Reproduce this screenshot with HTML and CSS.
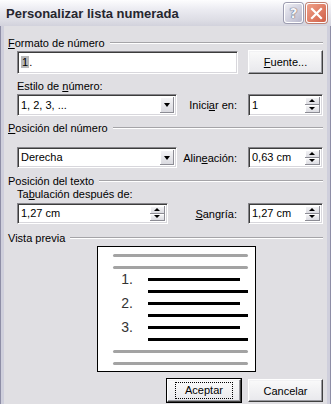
FILE: index.html
```html
<!DOCTYPE html>
<html lang="es">
<head>
  <meta charset="UTF-8" />
  <title>Personalizar lista numerada</title>
  <link rel="stylesheet" href="styles.css">
</head>
<body>
  <div class="window">
    <div class="titlebar">
      <span class="title">Personalizar lista numerada</span>
      <span class="tb-btn tb-help">?</span>
      <span class="tb-btn tb-close">
        <svg width="13" height="13" viewBox="0 0 13 13">
          <path d="M2 2 L11 11 M11 2 L2 11" stroke="#fff" stroke-width="2.2" stroke-linecap="square" />
        </svg>
      </span>
    </div>

    <div class="frame">
      <div class="client">
        <div class="group g-formato"><span><u>F</u>ormato de número</span></div>
        <div class="row row-formato">
          <div class="field text-format"><span class="shade">1</span>.</div>
          <div class="btn btn-fuente"><u>F</u>uente...</div>
        </div>

        <div class="label l-estilo">Estilo de <u>n</u>úmero:</div>
        <div class="row row-estilo">
          <div class="field select">1, 2, 3, ...<span class="drop"></span></div>
          <span class="side-label">Inici<u>a</u>r en:</span>
          <div class="field spin">1<span class="spin-btns"><span class="up"></span><span class="down"></span></span></div>
        </div>

        <div class="group g-numero"><span><u>P</u>osición del número</span></div>
        <div class="row row-numero">
          <div class="field select">Derecha<span class="drop"></span></div>
          <span class="side-label">Alin<u>e</u>ación:</span>
          <div class="field spin">0,63 cm<span class="spin-btns"><span class="up"></span><span class="down"></span></span></div>
        </div>

        <div class="group g-texto"><span>Posición del texto</span></div>
        <div class="label l-tab">Ta<u>b</u>ulación después de:</div>
        <div class="row row-texto">
          <div class="field spin">1,27 cm<span class="spin-btns"><span class="up"></span><span class="down"></span></span></div>
          <span class="side-label"><u>S</u>angría:</span>
          <div class="field spin">1,27 cm<span class="spin-btns"><span class="up"></span><span class="down"></span></span></div>
        </div>

        <div class="group g-vista"><span>Vista previa</span></div>
        <div class="preview">
          <div class="pv-row"><span></span><span class="line gray"></span></div>
          <div class="pv-row"><span></span><span class="line gray"></span></div>
          <div class="pv-row item"><span class="num">1.</span><span class="line black short"></span></div>
          <div class="pv-row item"><span></span><span class="line black"></span></div>
          <div class="pv-row item"><span class="num">2.</span><span class="line black short"></span></div>
          <div class="pv-row item"><span></span><span class="line black"></span></div>
          <div class="pv-row item"><span class="num">3.</span><span class="line black short"></span></div>
          <div class="pv-row item"><span></span><span class="line black"></span></div>
          <div class="pv-row"><span></span><span class="line gray"></span></div>
          <div class="pv-row"><span></span><span class="line gray"></span></div>
        </div>

        <div class="buttons">
          <div class="btn btn-default"><span class="focus">Aceptar</span></div>
          <div class="btn">Cancelar</div>
        </div>
      </div>
    </div>
  </div>
</body>
</html>
```

FILE: styles.css
```css
body {
  margin: 0;
  width: 331px;
  height: 404px;
  overflow: hidden;
  font-family: 'Liberation Sans', Tahoma, sans-serif;
  font-size: 11px;
  color: #000;
  background: #e0dfe3;
}

.window {
  height: 404px;
  display: flex;
  flex-direction: column;
}

/* title bar (XP silver, inactive) */
.titlebar {
  height: 26px;
  flex: none;
  display: flex;
  align-items: center;
  padding: 0 4px 0 6px;
  background: linear-gradient(#fdfdfe, #ececf2 35%, #dcdce4 80%, #d2d2dc);
  box-sizing: border-box;
}

.title {
  flex: 1;
  font-family: 'Liberation Sans', sans-serif;
  font-weight: bold;
  font-size: 13px;
  color: #26262e;
}

.tb-btn {
  width: 19px;
  height: 20px;
  box-sizing: border-box;
  border: 1px solid #fff;
  border-radius: 3px;
  display: flex;
  align-items: center;
  justify-content: center;
}

.tb-help {
  margin-right: 3px;
  background: linear-gradient(135deg, #eeeef4, #b8b8cc);
  box-shadow: 0 0 0 1px #9c9cb0;
  color: #f4f4f8;
  font-family: 'DejaVu Sans', sans-serif;
  font-weight: bold;
  font-size: 14px;
  text-shadow: 0 0 1px #505064, 0 0 1px #505064;
}

.tb-close {
  width: 21px;
  background: linear-gradient(135deg, #f0a088, #d06048);
  box-shadow: 0 0 0 1px #c08070;
}

/* window frame */
.frame {
  flex: 1;
  display: flex;
  border-left: 1px solid #8e8ea6;
  border-right: 1px solid #8e8ea6;
}

.client {
  flex: 1;
  border-left: 3px solid #cfcfdc;
  border-right: 3px solid #cfcfdc;
  padding: 0 4px;
  background: #e0dfe3;
}

u {
  text-decoration: underline;
  text-underline-offset: 1px;
}

/* group titles with an etched rule */
.group {
  height: 14px;
  display: flex;
  align-items: center;
  gap: 5px;
}

.group::after {
  content: "";
  flex: 1;
  border-top: 1px solid #a5a4a8;
  border-bottom: 1px solid #fff;
}

.g-formato { margin-top: 10px; }
.g-numero { margin-top: 5px; }
.g-texto { margin-top: 6px; }
.g-vista { margin-top: 7px; }

.label {
  height: 13px;
  line-height: 13px;
  margin-left: 9px;
}

.l-estilo { margin-top: 6px; }

.row {
  margin-left: 9px;
  display: grid;
  grid-template-columns: 1fr auto 75px;
  align-items: center;
}

.row-formato {
  grid-template-columns: 221px 1fr 75px;
  height: 24px;
}

.row-formato .btn { grid-column: 3; }
.row-estilo { margin-top: 1px; grid-template-columns: 160px 1fr 75px; }
.row-numero { margin-top: 12px; grid-template-columns: 160px 1fr 75px; }
.row-texto { margin-top: 2px; grid-template-columns: 151px 1fr 75px; }

.side-label {
  justify-self: end;
  margin-right: 11px;
}

/* sunken edit fields */
.field {
  position: relative;
  height: 22px;
  box-sizing: border-box;
  background: #fff;
  border: 1px solid;
  border-color: #86858a #fff #fff #86858a;
  box-shadow: inset 1px 1px #3c3c3c, inset -1px -1px #d8d7dc;
  padding: 0 0 0 3px;
  line-height: 20px;
  white-space: nowrap;
}

.text-format {
  height: 23px;
  line-height: 21px;
}

.shade {
  background: #b8b8b8;
  padding: 0 1px;
}

.row-numero .field,
.row-texto .field {
  height: 21px;
  line-height: 19px;
}

/* dropdown button in a combo */
.drop {
  position: absolute;
  right: 2px;
  top: 2px;
  bottom: 2px;
  width: 14px;
  background: linear-gradient(#f6f6f8, #d8d8de);
  box-shadow: inset -1px -1px #8c8c94, inset 1px 1px #fff;
}

.drop::after {
  content: "";
  position: absolute;
  left: 4px;
  top: 50%;
  margin-top: -2px;
  border-left: 3.5px solid transparent;
  border-right: 3.5px solid transparent;
  border-top: 4px solid #000;
}

/* spinner buttons */
.spin-btns {
  position: absolute;
  right: 2px;
  top: 2px;
  bottom: 2px;
  width: 15px;
  display: flex;
  flex-direction: column;
}

.spin-btns span {
  flex: 1;
  position: relative;
  background: linear-gradient(#f6f6f8, #d8d8de);
  box-shadow: inset -1px -1px #8c8c94, inset 1px 1px #fff;
}

.spin-btns span::after {
  content: "";
  position: absolute;
  left: 4px;
  top: 50%;
  margin-top: -2px;
  border-left: 3.5px solid transparent;
  border-right: 3.5px solid transparent;
}

.spin-btns .up::after { border-bottom: 3px solid #000; }
.spin-btns .down::after { border-top: 3px solid #000; }

/* push buttons */
.btn {
  height: 24px;
  box-sizing: border-box;
  display: flex;
  align-items: center;
  justify-content: center;
  background: linear-gradient(#fafafa, #e8e8ec);
  border: 1px solid;
  border-color: #fff #404040 #404040 #fff;
  box-shadow: inset -1px -1px #9a9aa0, inset 1px 1px #f2f2f4;
}

/* preview */
.preview {
  margin: 1px 0 0 89px;
  width: 159px;
  height: 126px;
  box-sizing: border-box;
  border: 1px solid #000;
  background: #fff;
  padding: 2px 0;
}

.pv-row {
  height: 12px;
  display: grid;
  grid-template-columns: 15px 1fr;
  align-items: center;
}

.pv-row.item { grid-template-columns: 50px 1fr; }

.num {
  justify-self: end;
  margin-right: 15px;
  font-size: 14px;
  line-height: 12px;
  color: #333;
}

.line {
  height: 3px;
  width: 135px;
}

.line.gray {
  background: #a3a3a3;
  border-radius: 2px;
}

.line.black {
  background: #000;
  width: 100px;
}

.line.black.short { width: 92px; }

/* bottom buttons */
.buttons {
  margin-top: 7px;
  display: flex;
  justify-content: flex-end;
  gap: 7px;
}

.buttons .btn {
  width: 75px;
  height: 23px;
}

.btn-default {
  outline: 1px solid #000;
  outline-offset: 0;
  border-color: #fff #404040 #404040 #fff;
  width: 74px !important;
}

.focus {
  border: 1px dotted #000;
  padding: 1px 9px;
  line-height: 13px;
}
```
